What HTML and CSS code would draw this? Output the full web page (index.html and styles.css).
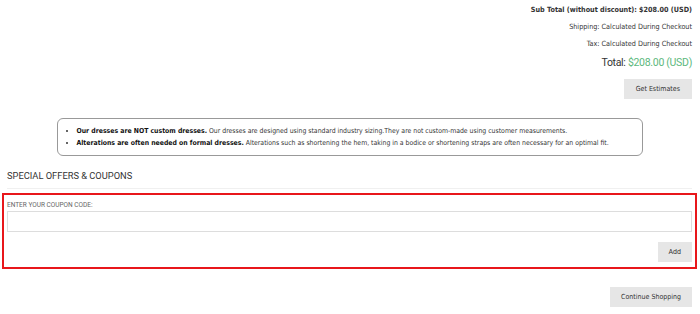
FILE: index.html
```html
<!DOCTYPE html>
<html>
	<head>
		<meta charset="utf-8"/>
		<title>Shopping Cart</title>
		<link rel="stylesheet" href="styles.css">
	</head>
	<body>
		<div class="page">
			<!-- totals -->
			<div class="summary">
				<p class="subtotal">Sub Total (without discount): $208.00 (USD)</p>
				<p class="line">Shipping: Calculated During Checkout</p>
				<p class="line">Tax: Calculated During Checkout</p>
				<p class="total">Total: <span class="price">$208.00 (USD)</span></p>
				<div class="actions">
					<button class="btn">Get Estimates</button>
				</div>
			</div>

			<!-- notice -->
			<div class="notice">
				<ul>
					<li><b>Our dresses are NOT custom dresses.</b> Our dresses are designed using standard industry sizing.They are not custom-made using customer measurements.</li>
					<li><b>Alterations are often needed on formal dresses.</b> Alterations such as shortening the hem, taking in a bodice or shortening straps are often necessary for an optimal fit.</li>
				</ul>
			</div>

			<h3 class="title">SPECIAL OFFERS &amp; COUPONS</h3>

			<div class="coupon">
				<label class="label">ENTER YOUR COUPON CODE:</label>
				<input class="field" type="text" />
				<div class="actions">
					<button class="btn btn-add">Add</button>
				</div>
			</div>

			<div class="actions bottom">
				<button class="btn">Continue Shopping</button>
			</div>
		</div>
	</body>
</html>
```
FILE: styles.css
```css
/*reset*/
* {
	margin: 0;
	padding: 0;
	box-sizing: border-box;
}

body {
	font-family: "DejaVu Sans Condensed", "DejaVu Sans", sans-serif;
	color: #333;
	background: #fff;
}

.page {
	padding: 0 8px 0 7px;
}

/*totals*/
.summary {
	text-align: right;
}

.summary p {
	font-size: 7.2px;
	line-height: 17px;
	color: #333;
}

.summary .subtotal {
	font-weight: bold;
	margin-top: 1px;
}

.summary .total {
	font-family: Roboto, sans-serif;
	font-size: 10.5px;
	letter-spacing: -0.3px;
	line-height: 20px;
	margin-top: 0;
	padding-top: 1px;
}

.price {
	color: #5cb87d;
}

.actions {
	display: flex;
	justify-content: flex-end;
}

.summary .actions {
	margin-top: 6px;
}

.btn {
	height: 20px;
	padding: 0 12px;
	border: none;
	background: #e6e6e6;
	color: #333;
	font-family: "DejaVu Sans Condensed", "DejaVu Sans", sans-serif;
	font-size: 7px;
	cursor: pointer;
}

/*notice*/
.notice {
	width: 586px;
	margin: 19px auto 0;
	padding: 6px 10px 6px 19px;
	border: 1px solid #999;
	border-radius: 6px;
	font-size: 6.85px;
	line-height: 12px;
	color: #333;
}

.notice ul {
	list-style: disc;
}

.notice b {
	color: #111;
}

/*coupons*/
.title {
	margin-top: 14px;
	padding-bottom: 6px;
	border-bottom: 1px solid #f0f0f0;
	font-family: Roboto, sans-serif;
	font-weight: normal;
	font-size: 9.3px;
	line-height: 12px;
	color: #333;
}

.coupon {
	margin: 4px -5px 0;
	padding: 6px 3px 5px;
	border: 2px solid #e8171b;
}

.label {
	display: block;
	font-family: Roboto, sans-serif;
	font-size: 6.5px;
	line-height: 9px;
	color: #666;
}

.field {
	display: block;
	width: 100%;
	height: 21px;
	margin-top: 1px;
	border: 1px solid #ddd;
	outline: none;
}

.coupon .actions {
	margin-top: 10px;
}

.btn-add {
	font-family: Roboto, sans-serif;
	padding: 0 11px;
}

.bottom {
	margin-top: 18px;
}

.bottom .btn {
	padding: 0 11px;
}
```
